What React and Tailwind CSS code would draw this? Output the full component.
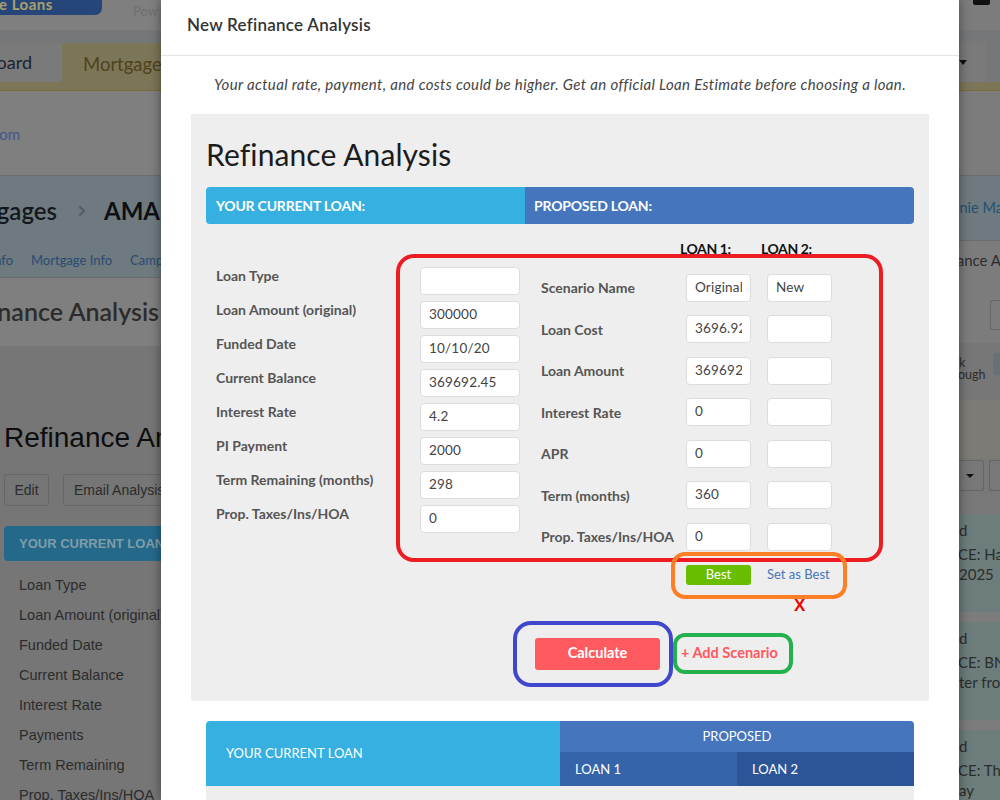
import { ChevronRight } from "lucide-react";

const currentLabels = [
  "Loan Type",
  "Loan Amount (original)",
  "Funded Date",
  "Current Balance",
  "Interest Rate",
  "PI Payment",
  "Term Remaining (months)",
  "Prop. Taxes/Ins/HOA",
];
const currentValues = ["", "300000", "10/10/20", "369692.45", "4.2", "2000", "298", "0"];
const proposedRows = [
  ["Scenario Name", "Original1", "New"],
  ["Loan Cost", "3696.92", ""],
  ["Loan Amount", "369692.45", ""],
  ["Interest Rate", "0", ""],
  ["APR", "0", ""],
  ["Term (months)", "360", ""],
  ["Prop. Taxes/Ins/HOA", "0", ""],
];
const backLabels = [
  "Loan Type",
  "Loan Amount (original)",
  "Funded Date",
  "Current Balance",
  "Interest Rate",
  "Payments",
  "Term Remaining",
  "Prop. Taxes/Ins/HOA",
];

function Field({ value, width }) {
  return (
    <input
      readOnly
      value={value}
      className={`h-[28px] ${width} rounded-[4px] border border-[#dcdcdc] bg-white px-[8px] pb-[2px] text-[13.5px] tracking-[0.2px] text-[#444] outline-none`}
    />
  );
}

function LeftBackdrop() {
  return (
    <div className="flex h-full w-[161px] shrink-0 flex-col overflow-hidden whitespace-nowrap bg-[#7f7f7f]">
      <div className="flex h-[30px] shrink-0 items-start">
        <div className="flex h-[15px] w-[102px] shrink-0 items-end overflow-hidden rounded-br-[7px] bg-[#264679]">
          <span className="ml-[-1px] mb-[2px] text-[15px] font-bold leading-[18px] tracking-[0.5px] text-[#a9a06c]">e Loans</span>
        </div>
        <span className="ml-[31px] mt-[2px] text-[13px] text-[#6e6e6e]">Pow</span>
      </div>
      <div className="h-[13px] shrink-0 bg-[#757779]" />
      <div className="flex h-[48px] shrink-0 items-start border-b border-[#7a6c35] bg-[#7c7658]">
        <div className="flex h-[39px] w-[62px] shrink-0 items-center justify-end overflow-hidden bg-[#7a7a7a] pr-[30px]">
          <span className="text-[18px] text-[#1c2430]">Dashboard</span>
        </div>
        <span className="ml-[21px] mt-[8px] text-[18.5px] text-[#51421a]">Mortgages</span>
      </div>
      <div className="flex h-[84px] shrink-0 items-center pt-[2px]">
        <div className="flex w-[20px] shrink-0 justify-end overflow-hidden">
          <span className="text-[15px] text-[#44568f]">.com</span>
        </div>
      </div>
      <div className="flex h-[103px] shrink-0 flex-col border-y border-[#6c6c6c] bg-[#6e7a80]">
        <div className="flex h-[70px] shrink-0 items-center">
          <div className="flex w-[57px] shrink-0 justify-end overflow-hidden">
            <span className="text-[24px] font-semibold text-[#14181c]">Mortgages</span>
          </div>
          <ChevronRight size={16} strokeWidth={3.5} className="ml-[17px] shrink-0 text-[#565d62]" />
          <span className="ml-[14px] text-[24px] font-bold text-[#0e1114]">AMANDA</span>
        </div>
        <div className="flex flex-1 items-center pb-[2px] text-[13px] text-[#2a4a70]">
          <div className="flex w-[13px] shrink-0 justify-end overflow-hidden">
            <span>Info</span>
          </div>
          <span className="ml-[18px]">Mortgage Info</span>
          <span className="ml-[18px]">Campaigns</span>
        </div>
      </div>
      <div className="flex h-[68px] shrink-0 items-center">
        <div className="flex w-[159px] shrink-0 justify-end overflow-hidden">
          <span className="text-[25px] font-semibold text-[#2c2c2c]">Refinance Analysis</span>
        </div>
      </div>
      <div className="flex flex-1 flex-col bg-[#767676] pl-[4px] pt-[74px] font-['Liberation_Sans',sans-serif]">
        <div className="text-[28px] leading-[36px] text-[#0d0d0d]">Refinance Analysis</div>
        <div className="mt-[18px] flex gap-[14px] text-[14px] text-[#2b2b2b]">
          <div className="flex h-[32px] w-[45px] shrink-0 items-center justify-center rounded-[3px] border border-[#666]">Edit</div>
          <div className="flex h-[32px] w-[120px] shrink-0 items-center rounded-[3px] border border-[#666] pl-[10px]">Email Analysis</div>
        </div>
        <div className="mt-[20px] flex h-[35px] w-[200px] shrink-0 items-center rounded-[4px] bg-[#25698a] pl-[15px] text-[13px] font-bold text-[#7f9da9]">
          YOUR CURRENT LOAN
        </div>
        <div className="pl-[15px] pt-[10px] text-[14.5px] text-[#2c2c2c]">
          {backLabels.map((label) => (
            <div key={label} className="flex h-[30px] items-center">{label}</div>
          ))}
        </div>
      </div>
    </div>
  );
}

function RightBackdrop() {
  return (
    <div className="flex h-full flex-1 flex-col overflow-hidden whitespace-nowrap bg-[#7c7c7c] text-[#2c2c2c]">
      <div className="h-[30px] shrink-0 pl-[14px]">
        <div className="h-[5px] w-[17px] rounded-b-[2px] bg-[#111]" />
      </div>
      <div className="h-[13px] shrink-0 bg-[#757779]" />
      <div className="flex h-[48px] shrink-0 flex-col border-b border-[#7a6c35] bg-[#757779]">
        <div className="flex h-[39px] w-[27px] items-center bg-[#7a7a7a]">
          <div className="h-0 w-0 border-x-[4px] border-t-[5px] border-x-transparent border-t-[#111]" />
        </div>
        <div className="h-[8px] bg-[#7c7658]" />
      </div>
      <div className="h-[84px] shrink-0" />
      <div className="flex h-[66px] shrink-0 items-center border-y border-[#6c6c6c] bg-[#6e7a80]">
        <div className="flex w-[41px] overflow-hidden">
          <span className="ml-[-22px] text-[14.5px] text-[#24506f]">Fannie Mae</span>
        </div>
      </div>
      <div className="flex h-[38px] shrink-0 items-center overflow-hidden text-[15px]">
        <span className="ml-[-36px]">Refinance Analysis</span>
      </div>
      <div className="flex h-[64px] shrink-0 items-start justify-end">
        <div className="mt-[21px] h-[30px] w-[10px] rounded-l-[3px] border-y border-l border-[#666]" />
      </div>
      <div className="flex h-[57px] shrink-0 items-start justify-between bg-[#777]">
        <div className="mt-[14px] text-[12.5px] leading-[12px]">
          <div>k</div>
          <div className="ml-[-1px]">ough</div>
        </div>
        <div className="mt-[10px] h-[22px] w-[7px] rounded-l-[3px] bg-[#6a7076]" />
      </div>
      <div className="flex h-[58px] shrink-0 bg-[#7e7a76]" />
      <div className="flex h-[56px] shrink-0 items-start gap-[5px] bg-[#787878] pt-[2px]">
        <div className="flex h-[31px] w-[25px] items-center rounded-r-[3px] border-y border-r border-[#666] pl-[7px]">
          <div className="h-0 w-0 border-x-[4px] border-t-[4px] border-x-transparent border-t-[#111]" />
        </div>
        <div className="h-[31px] w-[11px] rounded-l-[3px] border-y border-l border-[#666]" />
      </div>
      <div className="flex flex-1 flex-col gap-[10px] text-[15px]">
        {[
          ["ed", "CE: Happy", "2025"],
          ["ed", "CE: BNA", "ter from"],
          ["ed", "CE: That", "ay"],
        ].map(([a, b, c]) => (
          <div key={b} className="h-[98px] shrink-0 bg-[#6c7d7b] pt-[6px] leading-[20px]">
            <div className="ml-[-8px]">{a}</div>
            <div className="ml-[-1px] mt-[4px]">{b}</div>
            <div>{c}</div>
          </div>
        ))}
      </div>
    </div>
  );
}

function Modal() {
  return (
    <div className="relative z-10 flex h-full w-[798px] shrink-0 flex-col overflow-hidden bg-white shadow-[0_0_10px_rgba(0,0,0,0.45)]">
      <div className="flex h-[56px] shrink-0 items-center border-b border-[#e4e4e4] pb-[6px] pl-[26px] text-[17px] font-semibold tracking-[0.25px] text-[#333]">
        New Refinance Analysis
      </div>
      <div className="flex h-[58px] shrink-0 items-center justify-center pb-[2px] text-[15px] italic tracking-[0.34px] text-[#444]">
        Your actual rate, payment, and costs could be higher. Get an official Loan Estimate before choosing a loan.
      </div>
      <div className="mx-[30px] flex h-[587px] shrink-0 flex-col bg-[#eeeeee] px-[15px]">
        <div className="flex h-[73px] shrink-0 items-center pt-[7px] text-[30px] tracking-[0.1px] text-[#1c1c1c]">Refinance Analysis</div>
        <div className="flex h-[37px] shrink-0 items-center overflow-hidden rounded-[4px] pb-0 text-[14px] font-bold tracking-[-0.2px] text-white">
          <div className="flex h-full w-[319px] items-center bg-[#36b0e0] pb-[1px] pl-[10px]">YOUR CURRENT LOAN:</div>
          <div className="flex h-full flex-1 items-center bg-[#4475bd] pb-[1px] pl-[9px]">PROPOSED LOAN:</div>
        </div>
        <div className="flex text-[14px]">
          <div className="w-[214px] shrink-0 pl-[10px] pt-[34px] font-bold text-[#555]">
            {currentLabels.map((label) => (
              <div key={label} className="flex h-[34px] items-center">{label}</div>
            ))}
          </div>
          <div className="w-[100px] shrink-0 pt-[43px]">
            {currentValues.map((value, i) => (
              <div key={i} className="h-[34px]">
                <Field value={value} width="w-[100px]" />
              </div>
            ))}
          </div>
          <div className="pl-[21px] pt-[14px]">
            <div className="flex h-[29px] pl-[139px] font-bold tracking-[-0.4px] text-[#111]">
              <div className="w-[81px]">LOAN 1:</div>
              <div>LOAN 2:</div>
            </div>
            {proposedRows.map(([label, one, two]) => (
              <div key={label} className="flex h-[41.5px] items-center">
                <div className="w-[145px] font-bold text-[#555]">{label}</div>
                <Field value={one} width="w-[65px]" />
                <div className="w-[16px]" />
                <Field value={two} width="w-[65px]" />
              </div>
            ))}
            <div className="mt-[7.5px] flex h-[20px] items-center pl-[145px] text-[13px]">
              <div className="flex h-full w-[65px] items-center justify-center rounded-[3px] bg-[#69bd00] text-white">Best</div>
              <div className="ml-[16px] text-[#4475bd]">Set as Best</div>
            </div>
          </div>
        </div>
        <div className="flex flex-1 items-start pl-[329px] pt-[53px] text-[14.5px] font-bold">
          <div className="flex h-[32px] w-[125px] items-center justify-center rounded-[3px] bg-[#ff5a5f] pb-[2px] text-white">Calculate</div>
          <div className="ml-[21px] flex h-[32px] items-center pb-[2px] text-[#ff5a5f]">+ Add Scenario</div>
        </div>
      </div>
      <div className="mx-[45px] mt-[20px] flex h-[65px] shrink-0 overflow-hidden rounded-t-[4px] text-[13px] text-white">
        <div className="flex w-[354px] items-center bg-[#36b0e0] pl-[20px]">YOUR CURRENT LOAN</div>
        <div className="flex flex-1 flex-col bg-[#4475bd]">
          <div className="flex h-[31px] items-center justify-center">PROPOSED</div>
          <div className="flex flex-1">
            <div className="flex flex-1 items-center bg-[#3565a8] pl-[15px] pt-[1px]">LOAN 1</div>
            <div className="flex flex-1 items-center bg-[#2b5597] pl-[15px] pt-[1px]">LOAN 2</div>
          </div>
        </div>
      </div>
      <div className="mx-[45px] flex-1 bg-[#eeeeee]" />
    </div>
  );
}

// hand-drawn marks on top of the screenshot
function Annotations() {
  return (
    <div className="pointer-events-none absolute inset-0 z-20">
      <div className="absolute left-[396px] top-[254px] h-[308px] w-[487px] rounded-[18px] border-[4px] border-[#ed1c24]" />
      <div className="absolute left-[671px] top-[552px] h-[47px] w-[176px] rounded-[14px] border-[4px] border-[#ff7f27]" />
      <div className="absolute left-[513px] top-[621px] h-[66px] w-[160px] rounded-[18px] border-[4px] border-[#3f48cc]" />
      <div className="absolute left-[673px] top-[633px] h-[41px] w-[120px] rounded-[12px] border-[4px] border-[#22b14c]" />
      <div className="absolute left-[794px] top-[596px] font-['Liberation_Sans',sans-serif] text-[17px] font-bold leading-[20px] text-[#f00000]">X</div>
    </div>
  );
}

export default function App() {
  return (
    <div className="relative flex h-[800px] w-[1000px] overflow-hidden font-['Lato',sans-serif]">
      <LeftBackdrop />
      <Modal />
      <RightBackdrop />
      <Annotations />
    </div>
  );
}
